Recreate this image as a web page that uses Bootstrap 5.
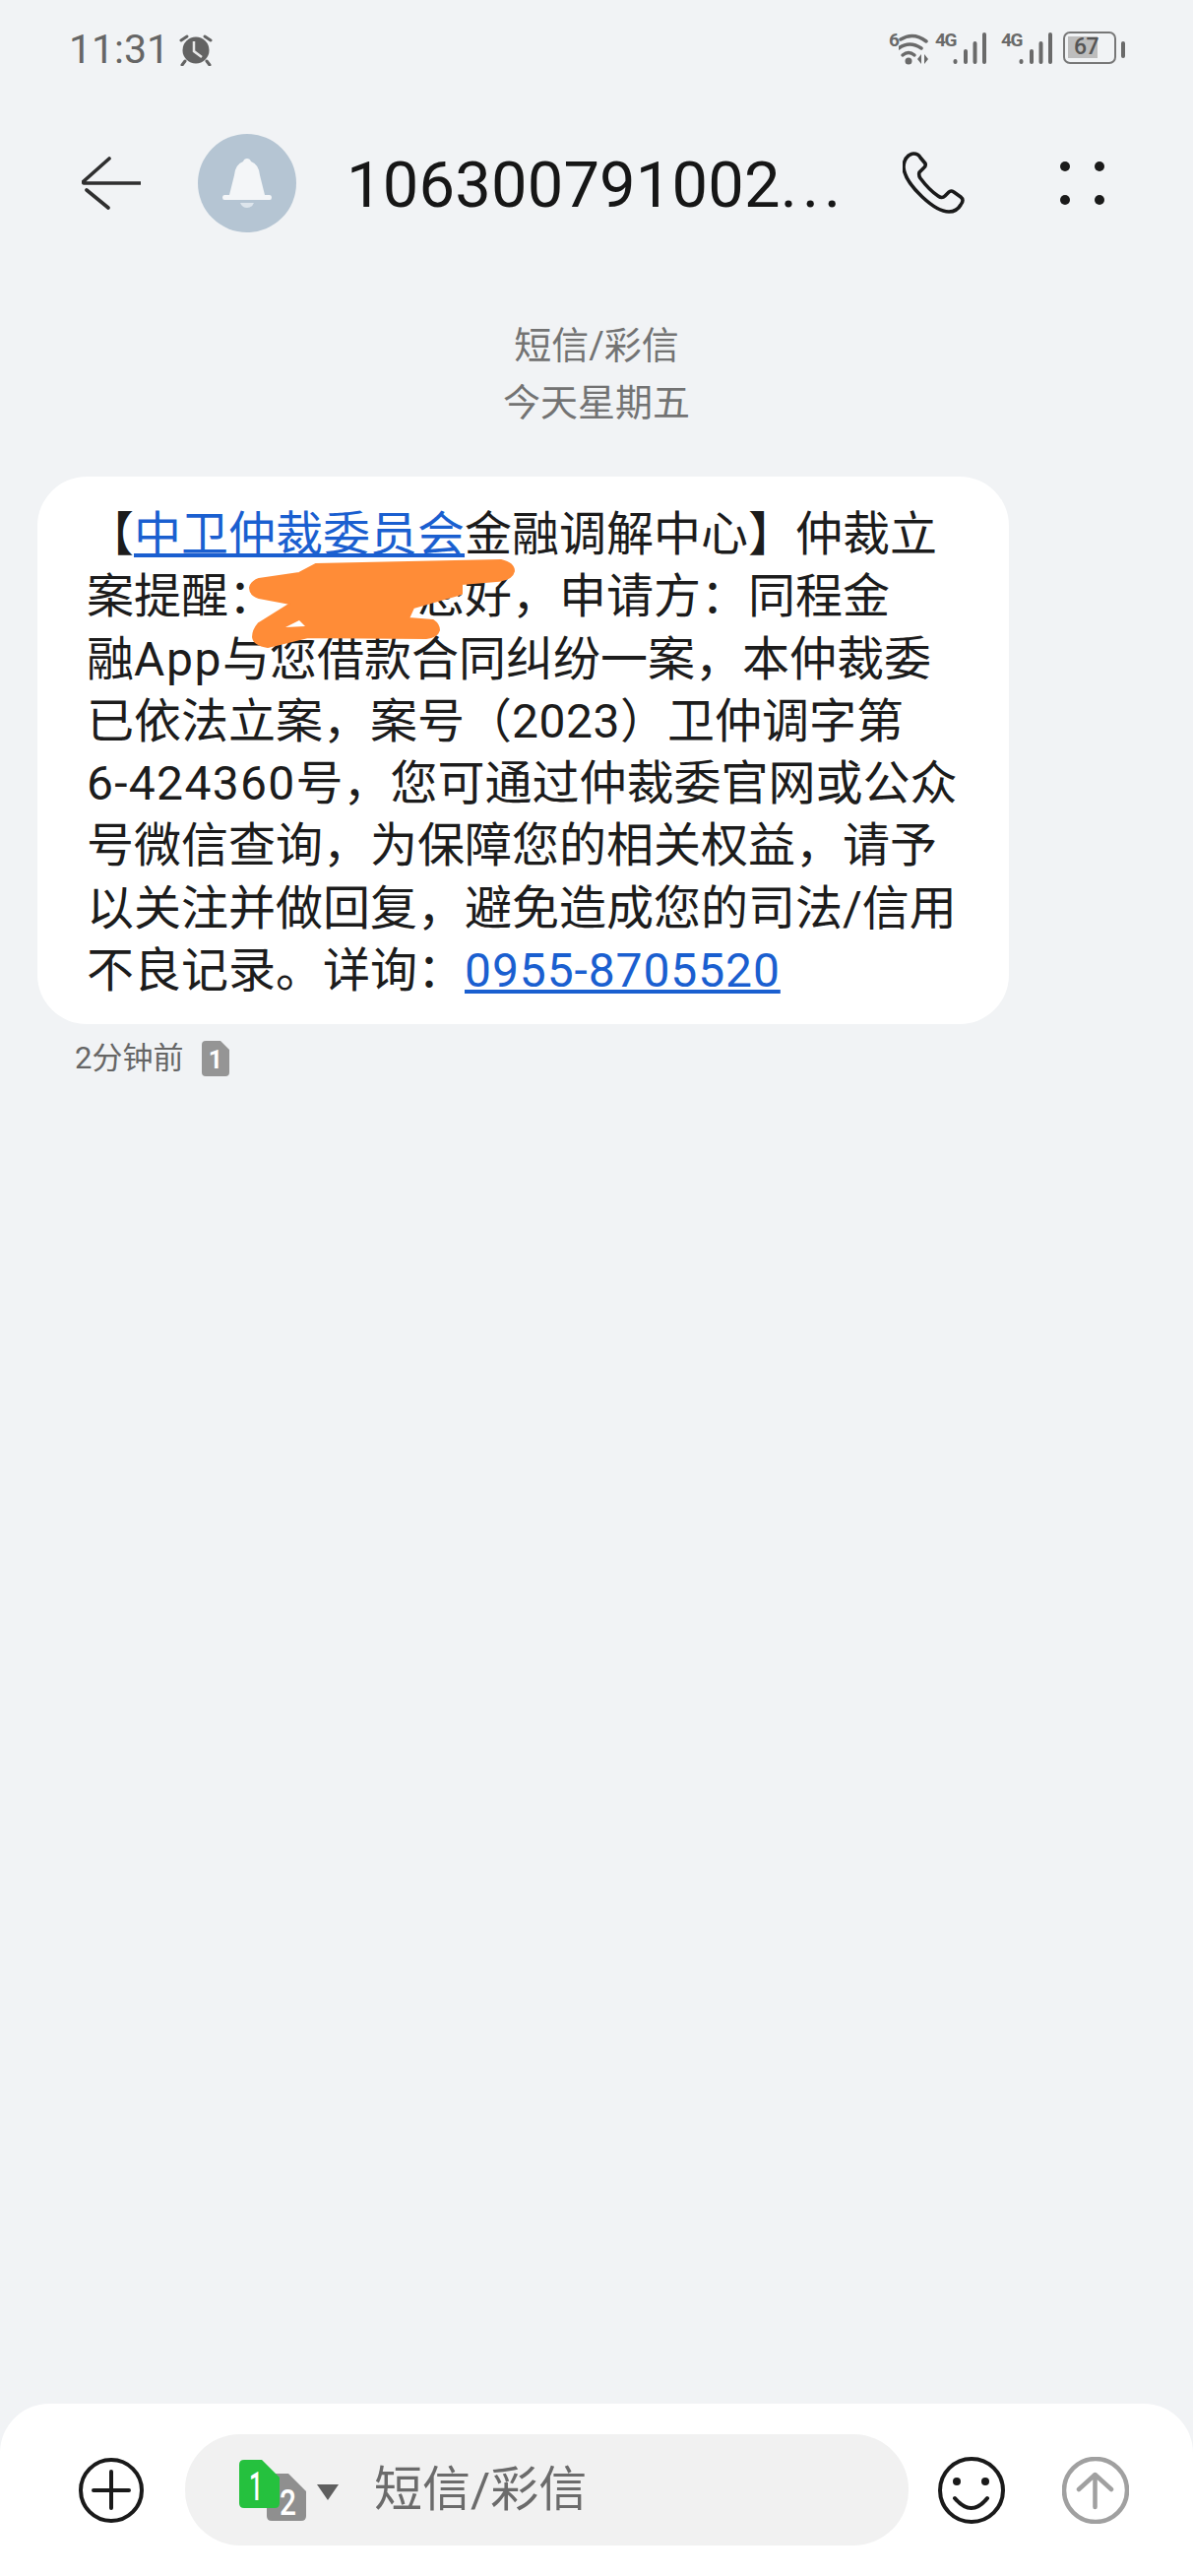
<!DOCTYPE html>
<html lang="zh-CN">

<head>
    <meta charset="UTF-8">
    <title>短信/彩信</title>
    <meta name="viewport" content="width=device-width, initial-scale=1">
    <link href="https://cdn.jsdelivr.net/npm/bootstrap@5.3.3/dist/css/bootstrap.min.css" rel="stylesheet">
    <style>
        body {
            background: #f1f3f5;
            font-family: Roboto, "Noto Sans CJK SC", sans-serif;
            overflow: hidden;
        }

        .status-row { height: 100px; padding: 0 69px 0 70px; }
        .status-time { font-size: 41px; line-height: 1; color: #666; margin-right: 10px; }
        .status-icons { height: 36px; color: #6a6a6a; }
        .net-tag {
            width: 18px;
            height: 17px;
            font-size: 19px;
            line-height: 17px;
            font-weight: 700;
            letter-spacing: -1.5px;
            white-space: nowrap;
            overflow: visible;
        }
        .net-six { width: 9px; letter-spacing: 0; margin-right: 1px; }
        .net-first { margin-left: 5px; }
        .net-second { margin-left: 15px; }
        .batt-shell {
            width: 54px;
            height: 33px;
            margin-left: 11px;
            border: 2.5px solid #777;
            border-radius: 7px;
            background: linear-gradient(#bdbdbd, #bdbdbd) no-repeat 3px 3px / 30px 22px;
            font-size: 23px;
            line-height: 28px;
            font-weight: 500;
            color: #555;
            padding-left: 9px;
            letter-spacing: -.5px;
        }
        .batt-nub { width: 4px; height: 17px; margin-left: 5px; background: #6a6a6a; border-radius: 2px; }

        .head-row { height: 100px; margin-top: 36px; padding-left: 83px; }
        .head-avatar { width: 100px; height: 100px; background: #b5c5d3; margin-left: 58px; margin-right: 51px; }
        .head-title { font-size: 65px; line-height: 1; padding-top: 5px; color: #161616; width: 565px; letter-spacing: .2px; white-space: nowrap; flex-shrink: 0; }
        .head-title span { letter-spacing: 5px; }
        .head-dots { margin-left: 96px; }

        .date-block { margin-top: 86px; font-size: 38px; line-height: 58px; color: #737373; }

        .msg-bubble {
            width: 987px;
            margin: 46px 0 0 38px;
            padding: 27px 0 23px 50px;
            background: #fff;
            border-radius: 50px;
            font-size: 48px;
            line-height: 63.3px;
            color: #1c1c1c;
            white-space: nowrap;
        }
        .msg-bubble a { color: #1a5fd0; }
        .msg-gap { display: inline-block; width: 3em; }
        .msg-app { letter-spacing: 1.6px; }
        .msg-case { letter-spacing: .5px; }
        .msg-ref { letter-spacing: 1.3px; }
        .msg-phone { letter-spacing: .9px; }
        .msg-scribble { left: 210px; top: 80px; }

        .msg-meta { margin: 15px 0 0 76px; height: 40px; font-size: 31px; color: #666; }
        .msg-meta svg { margin-left: 19px; }

        .compose-bar {
            height: 175px;
            padding-left: 80px;
            background: #fff;
            border-radius: 50px 50px 0 0;
        }
        .compose-pill {
            width: 735px;
            height: 113px;
            margin: 0 30px 0 42px;
            padding-left: 55px;
            background: #f1f1f1;
            border-radius: 56px;
        }
        .compose-hint { margin-left: 36px; font-size: 49px; line-height: 1; color: #6b6b6b; }
        .compose-send { margin-left: 58px; }

        svg text { font-family: Roboto, sans-serif; }
    </style>
</head>

<body>
    <div class="d-flex flex-column vh-100">

        <!-- status bar -->
        <div class="status-row d-flex align-items-center flex-shrink-0">
            <span class="status-time">11:31</span>
            <svg width="34" height="34" viewBox="182 33 34 34">
                <circle cx="199" cy="51" r="13.500" fill="#636363" />
                <path d="M197 42v10l8 6" fill="none" stroke="#e8e8e8" stroke-width="2.500" />
                <path d="M184 41l6-4M214 41l-6-4M188 62l-3 4M210 62l3 4" stroke="#636363" stroke-width="3" stroke-linecap="round" />
            </svg>
            <div class="status-icons ms-auto d-flex align-items-start">
                <span class="net-tag net-six">6</span>
                <svg width="32" height="36" viewBox="916 32 32 36">
                    <g fill="none" stroke="#6a6a6a" stroke-linecap="round" stroke-width="3.500">
                        <path d="M918 40q13-8 26 2" />
                        <path d="M916 49q11-8 23 0" />
                        <path d="M920 56q6-5 12 0" />
                    </g>
                    <circle cx="926" cy="62" r="3.500" fill="#6a6a6a" />
                    <path d="M935 60l4-5v10zM942 55l4 5-4 5z" fill="#6a6a6a" />
                </svg>
                <span class="net-tag net-first">4G</span>
                <svg width="34" height="36" viewBox="972 32 34 36">
                    <g fill="#6a6a6a">
                        <rect x="972.500" y="60" width="4" height="5" rx="2" />
                        <rect x="983" y="50" width="4" height="15" rx="2" />
                        <rect x="992.500" y="42" width="4" height="23" rx="2" />
                        <rect x="1002" y="33" width="4" height="32" rx="2" />
                    </g>
                </svg>
                <span class="net-tag net-second">4G</span>
                <svg width="34" height="36" viewBox="972 32 34 36">
                    <g fill="#6a6a6a">
                        <rect x="972.500" y="60" width="4" height="5" rx="2" />
                        <rect x="983" y="50" width="4" height="15" rx="2" />
                        <rect x="992.500" y="42" width="4" height="23" rx="2" />
                        <rect x="1002" y="33" width="4" height="32" rx="2" />
                    </g>
                </svg>
                <div class="batt-shell">67</div>
                <div class="batt-nub align-self-center"></div>
            </div>
        </div>

        <!-- conversation header -->
        <div class="head-row d-flex align-items-center flex-shrink-0">
            <svg width="60" height="54" viewBox="83 160 60 54">
                <path d="M111 162L84 186M143 187H85M88 194L110 212" fill="none" stroke="#2f2f2f" stroke-width="3.600" stroke-linecap="round" />
            </svg>
            <div class="head-avatar rounded-circle d-flex align-items-center justify-content-center flex-shrink-0">
                <svg width="52" height="52" viewBox="224 160 52 52">
                    <path d="M250 161q3 0 4 3q8 3 9 14l5 20h5q2 0 2 2.500t-2 2.500h-46q-2 0-2-2.500t2-2.500h5l5-20q1-11 9-14q1-3 4-3z" fill="#f4f6f8" />
                    <path d="M243 206h14q-2 5-7 5t-7-5z" fill="#dde5ec" />
                </svg>
            </div>
            <div class="head-title">106300791002<span>...</span></div>
            <svg class="flex-shrink-0" width="64" height="64" viewBox="916 155 64 64">
                <path d="M927 157Q932 157 934 161L939 167Q940 170 937 172L933 176Q932 179 934 182Q943 194 952 200Q956 203 959 200L963 196Q965 194 968 196L975 201Q979 204 975 209Q971 216 963 216Q952 216 936 201Q918 184 917 171Q917 163 922 159Q925 157 927 157Z" fill="none" stroke="#1a1a1a" stroke-width="3.600" stroke-linejoin="round" />
            </svg>
            <svg class="head-dots flex-shrink-0" width="46" height="46" viewBox="1076 162 46 46">
                <g fill="#1a1a1a">
                    <circle cx="1081" cy="168" r="5" />
                    <circle cx="1116" cy="168" r="5" />
                    <circle cx="1081" cy="202" r="5" />
                    <circle cx="1116" cy="202" r="5" />
                </g>
            </svg>
        </div>

        <!-- date -->
        <div class="date-block text-center flex-shrink-0">
            <div>短信/彩信</div>
            <div>今天星期五</div>
        </div>

        <!-- message -->
        <div class="msg-bubble position-relative flex-shrink-0">
            【<a href="#">中卫仲裁委员会</a>金融调解中心】仲裁立<br>
            案提醒：<span class="msg-gap"></span>您好，申请方：同程金<br>
            融<span class="msg-app">App</span>与您借款合同纠纷一案，本仲裁委<br>
            已依法立案，案号（<span class="msg-case">2023</span>）卫仲调字第<br>
            <span class="msg-ref">6-424360</span>号，您可通过仲裁委官网或公众<br>
            号微信查询，为保障您的相关权益，请予<br>
            以关注并做回复，避免造成您的司法/信用<br>
            不良记录。详询：<a class="msg-phone" href="#">0955-8705520</a>
            <!-- scribble drawn over the name -->
            <svg class="msg-scribble position-absolute" width="280" height="100" viewBox="248 564 280 100">
                <path d="M321 573L509 569Q522 572 522 580Q520 589 504 590L469 593V603L420 617L415 628L440 630Q446 634 446 640Q444 647 433 648L313 647L272 657Q258 655 257 647Q257 640 263 633L295 613L263 607Q254 604 254 597Q255 591 263 588L304 582Z" fill="#ff8c37" stroke="#ff8c37" stroke-width="2" stroke-linejoin="round" />
                <path d="M290 637L304 630L310 636Z" fill="#fff" />
            </svg>
        </div>

        <div class="msg-meta d-flex align-items-center flex-shrink-0">
            <span>2分钟前</span>
            <svg width="28" height="36" viewBox="0 0 28 36">
                <path d="M4 0H19L28 9V32Q28 36 24 36H4Q0 36 0 32V4Q0 0 4 0Z" fill="#959595" />
                <text x="14" y="28" font-size="25" font-weight="700" fill="#fff" text-anchor="middle">1</text>
            </svg>
        </div>

        <!-- compose bar -->
        <div class="compose-bar d-flex align-items-center mt-auto flex-shrink-0">
            <svg class="flex-shrink-0" width="66" height="68" viewBox="80 2495 66 68">
                <circle cx="113" cy="2529" r="31" fill="none" stroke="#1a1a1a" stroke-width="4" />
                <path d="M95 2529H131M113 2510V2547" stroke="#1a1a1a" stroke-width="4" stroke-linecap="round" />
            </svg>
            <div class="compose-pill d-flex align-items-center flex-shrink-0">
                <svg class="flex-shrink-0" width="101" height="72" viewBox="243 2492 101 72">
                    <path d="M277 2511H293L311 2529V2554Q311 2559 306 2559H276Q271 2559 271 2554V2516Q271 2511 277 2511Z" fill="#8f8f8f" />
                    <path d="M248 2497H266L284 2515V2541Q284 2546 279 2546H248Q243 2546 243 2541V2502Q243 2497 248 2497Z" fill="#25c13e" />
                    <text x="253" y="2538" font-size="40" font-weight="500" fill="#fff" textLength="14" lengthAdjust="spacingAndGlyphs">1</text>
                    <text x="284" y="2553" font-size="36" font-weight="500" fill="#fff" textLength="17" lengthAdjust="spacingAndGlyphs">2</text>
                    <path d="M322 2522H344L333 2538Z" fill="#5f5f5f" />
                </svg>
                <span class="compose-hint">短信/彩信</span>
            </div>
            <svg class="flex-shrink-0" width="68" height="68" viewBox="953 2494 68 68">
                <circle cx="987" cy="2528" r="32" fill="none" stroke="#1a1a1a" stroke-width="4" />
                <circle cx="972" cy="2519" r="4" fill="#1a1a1a" />
                <circle cx="1001" cy="2519" r="4" fill="#1a1a1a" />
                <path d="M970 2536Q987 2556 1003 2536" fill="none" stroke="#1a1a1a" stroke-width="4" stroke-linecap="round" />
            </svg>
            <svg class="compose-send flex-shrink-0" width="68" height="68" viewBox="1078 2495 68 68">
                <circle cx="1112" cy="2529" r="32" fill="none" stroke="#a0a0a0" stroke-width="4.500" />
                <path d="M1111.500 2546V2513M1095 2528L1111.500 2513L1128 2528" fill="none" stroke="#a0a0a0" stroke-width="4.500" stroke-linecap="round" stroke-linejoin="round" />
            </svg>
        </div>
    </div>

    <script src="https://cdn.jsdelivr.net/npm/bootstrap@5.3.3/dist/js/bootstrap.bundle.min.js"></script>
</body>

</html>
